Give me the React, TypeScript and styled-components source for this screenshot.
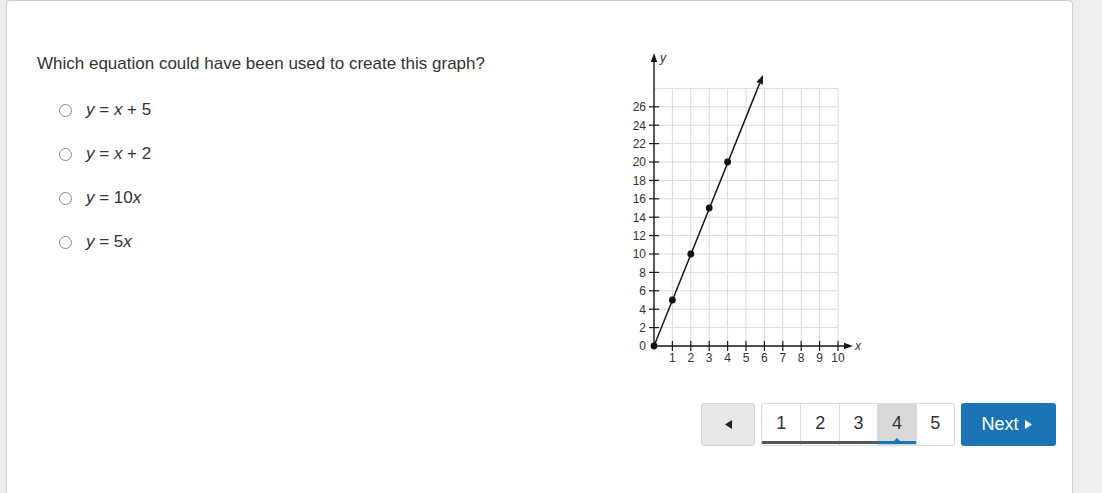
import React from "react";
import styled, { createGlobalStyle } from "styled-components";

const Global = createGlobalStyle`
  html, body { margin: 0; padding: 0; background: #eeeeee; }
  body { font-family: "Liberation Sans", Arial, sans-serif; color: #333; }
`;

const Card = styled.div`
  box-sizing: border-box;
  margin-left: 6px;
  width: 1067px;
  min-height: 493px;
  background: #fff;
  border: 1px solid #cfcfcf;
  border-bottom: none;
  border-radius: 4px 4px 0 0;
  padding: 47px 16px 0 30px;
  display: flex;
  flex-direction: column;
`;

const Content = styled.div`
  display: flex;
  align-items: flex-start;
`;

const QuestionCol = styled.div`
  flex: 0 0 593px;
  padding-top: 6px;
`;

const Prompt = styled.div`
  font-size: 17px;
  line-height: 20px;
  color: #333;
`;

const Options = styled.div`
  margin-top: 26px;
  padding-left: 22px;
  display: flex;
  flex-direction: column;
  gap: 24px;
`;

const Option = styled.label`
  display: flex;
  align-items: center;
  height: 20px;
  font-size: 17px;
  line-height: 20px;
  color: #333;
`;

const Radio = styled.span`
  box-sizing: border-box;
  width: 13px;
  height: 13px;
  border-radius: 50%;
  border: 1px solid #8a8a8a;
  background: #fff;
  margin-right: 14px;
  margin-top: 1px;
  flex: none;
`;

const Var = styled.i`
  font-style: italic;
`;

const GraphSvg = styled.svg`
  display: block;
  flex: none;
`;

const Footer = styled.div`
  margin-top: 38px;
  display: flex;
  justify-content: flex-end;
  gap: 6px;
`;

const PrevButton = styled.div`
  box-sizing: border-box;
  width: 54px;
  height: 43px;
  background: #e8e8e8;
  border: 1px solid #d6d6d6;
  border-radius: 3px;
  display: flex;
  align-items: center;
  justify-content: center;
`;

const PageGroup = styled.div`
  box-sizing: border-box;
  height: 43px;
  display: flex;
  border: 1px solid #dcdcdc;
  border-radius: 2px;
  background: #fff;
`;

type Status = "done" | "current" | "todo";

const PageCell = styled.div<{ $status: Status; $first: boolean }>`
  position: relative;
  box-sizing: border-box;
  width: 38.4px;
  height: 100%;
  display: flex;
  align-items: center;
  justify-content: center;
  font-size: 18px;
  color: #333;
  border-left: ${(p) => (p.$first ? "none" : "1px solid #dcdcdc")};
  background: ${(p) => (p.$status === "current" ? "#d9d9d9" : "#fff")};
  padding-bottom: 2px;

  &::after {
    content: "";
    display: ${(p) => (p.$status === "todo" ? "none" : "block")};
    position: absolute;
    left: ${(p) => (p.$first ? "0" : "-1px")};
    right: 0;
    bottom: 1px;
    height: 3px;
    background: ${(p) => (p.$status === "current" ? "#1b75b5" : "#595959")};
  }
`;

const Caret = styled.span`
  position: absolute;
  left: 50%;
  bottom: 4px;
  margin-left: -3px;
  width: 0;
  height: 0;
  border-left: 3px solid transparent;
  border-right: 3px solid transparent;
  border-bottom: 3px solid #1b75b5;
`;

const NextButton = styled.div`
  box-sizing: border-box;
  width: 95px;
  height: 43px;
  background: #1b75b5;
  border-radius: 3px;
  color: #fff;
  font-size: 18px;
  display: flex;
  align-items: center;
  justify-content: center;
  gap: 6px;
  padding-right: 4px;
`;

const S = 18.4;
const OX = 654;
const OY = 346;

function Graph() {
  const xs = Array.from({ length: 11 }, (_, i) => OX + i * S);
  const ys = Array.from({ length: 15 }, (_, j) => OY - j * S);
  const pts = [0, 1, 2, 3, 4].map((x) => [OX + x * S, OY - (5 * x * S) / 2]);
  const lineEnd = [763, 75];
  const ang = Math.atan2(lineEnd[1] - OY, lineEnd[0] - OX);
  const ah = 9;
  const aw = 3.5;
  const bx = lineEnd[0] - ah * Math.cos(ang);
  const by = lineEnd[1] - ah * Math.sin(ang);
  const px = -Math.sin(ang) * aw;
  const py = Math.cos(ang) * aw;
  const labelStyle = { fontFamily: "'Liberation Sans', Arial, sans-serif", fontSize: 12, fill: "#333" };
  return (
    <GraphSvg width={240} height={317} viewBox="630 48 240 317">
      {xs.map((x, i) => (
        <line key={"gx" + i} x1={x} y1={ys[14]} x2={x} y2={OY} stroke="#dadada" strokeWidth={1} />
      ))}
      {ys.map((y, j) => (
        <line key={"gy" + j} x1={OX} y1={y} x2={xs[10]} y2={y} stroke="#dadada" strokeWidth={1} />
      ))}
      <line x1={OX} y1={OY} x2={OX} y2={60} stroke="#1a1a1a" strokeWidth={1.4} />
      <polygon points={`${OX},53 ${OX - 3.2},62 ${OX + 3.2},62`} fill="#1a1a1a" />
      <line x1={OX} y1={OY} x2={846} y2={OY} stroke="#1a1a1a" strokeWidth={1.4} />
      <polygon points={`853,${OY} 844,${OY - 3.2} 844,${OY + 3.2}`} fill="#1a1a1a" />
      {xs.slice(1).map((x, i) => (
        <line key={"tx" + i} x1={x} y1={OY - 5} x2={x} y2={OY + 5} stroke="#1a1a1a" strokeWidth={1.2} />
      ))}
      {ys.slice(1, 14).map((y, j) => (
        <line key={"ty" + j} x1={OX - 5} y1={y} x2={OX + 5} y2={y} stroke="#1a1a1a" strokeWidth={1.2} />
      ))}
      {xs.slice(1).map((x, i) => (
        <text key={"lx" + i} x={x} y={362} textAnchor="middle" style={labelStyle}>
          {i + 1}
        </text>
      ))}
      {ys.slice(0, 14).map((y, j) => (
        <text key={"ly" + j} x={646} y={y + 4.3} textAnchor="end" style={labelStyle}>
          {j * 2}
        </text>
      ))}
      <text x={855} y={350} style={{ ...labelStyle, fontStyle: "italic" }}>x</text>
      <text x={660} y={62} style={{ ...labelStyle, fontStyle: "italic" }}>y</text>
      <line x1={OX} y1={OY} x2={bx} y2={by} stroke="#1a1a1a" strokeWidth={1.5} />
      <polygon
        points={`${lineEnd[0]},${lineEnd[1]} ${bx + px},${by + py} ${bx - px},${by - py}`}
        fill="#1a1a1a"
      />
      {pts.map(([x, y], i) => (
        <circle key={"p" + i} cx={x} cy={y} r={3.4} fill="#111" />
      ))}
    </GraphSvg>
  );
}

const pages: Status[] = ["done", "done", "done", "current", "todo"];

export default function App() {
  return (
    <>
      <Global />
      <Card>
        <Content>
          <QuestionCol>
            <Prompt>Which equation could have been used to create this graph?</Prompt>
            <Options>
              <Option>
                <Radio />
                <span>
                  <Var>y</Var> = <Var>x</Var> + 5
                </span>
              </Option>
              <Option>
                <Radio />
                <span>
                  <Var>y</Var> = <Var>x</Var> + 2
                </span>
              </Option>
              <Option>
                <Radio />
                <span>
                  <Var>y</Var> = 10<Var>x</Var>
                </span>
              </Option>
              <Option>
                <Radio />
                <span>
                  <Var>y</Var> = 5<Var>x</Var>
                </span>
              </Option>
            </Options>
          </QuestionCol>
          <Graph />
        </Content>
        <Footer>
          <PrevButton>
            <svg width="7" height="9" viewBox="0 0 7 9">
              <polygon points="0,4.5 7,0 7,9" fill="#222" />
            </svg>
          </PrevButton>
          <PageGroup>
            {pages.map((s, i) => (
              <PageCell key={i} $status={s} $first={i === 0}>
                {i + 1}
                {s === "current" && <Caret />}
              </PageCell>
            ))}
          </PageGroup>
          <NextButton>
            Next
            <svg width="7" height="9" viewBox="0 0 7 9">
              <polygon points="7,4.5 0,0 0,9" fill="#fff" />
            </svg>
          </NextButton>
        </Footer>
      </Card>
    </>
  );
}
